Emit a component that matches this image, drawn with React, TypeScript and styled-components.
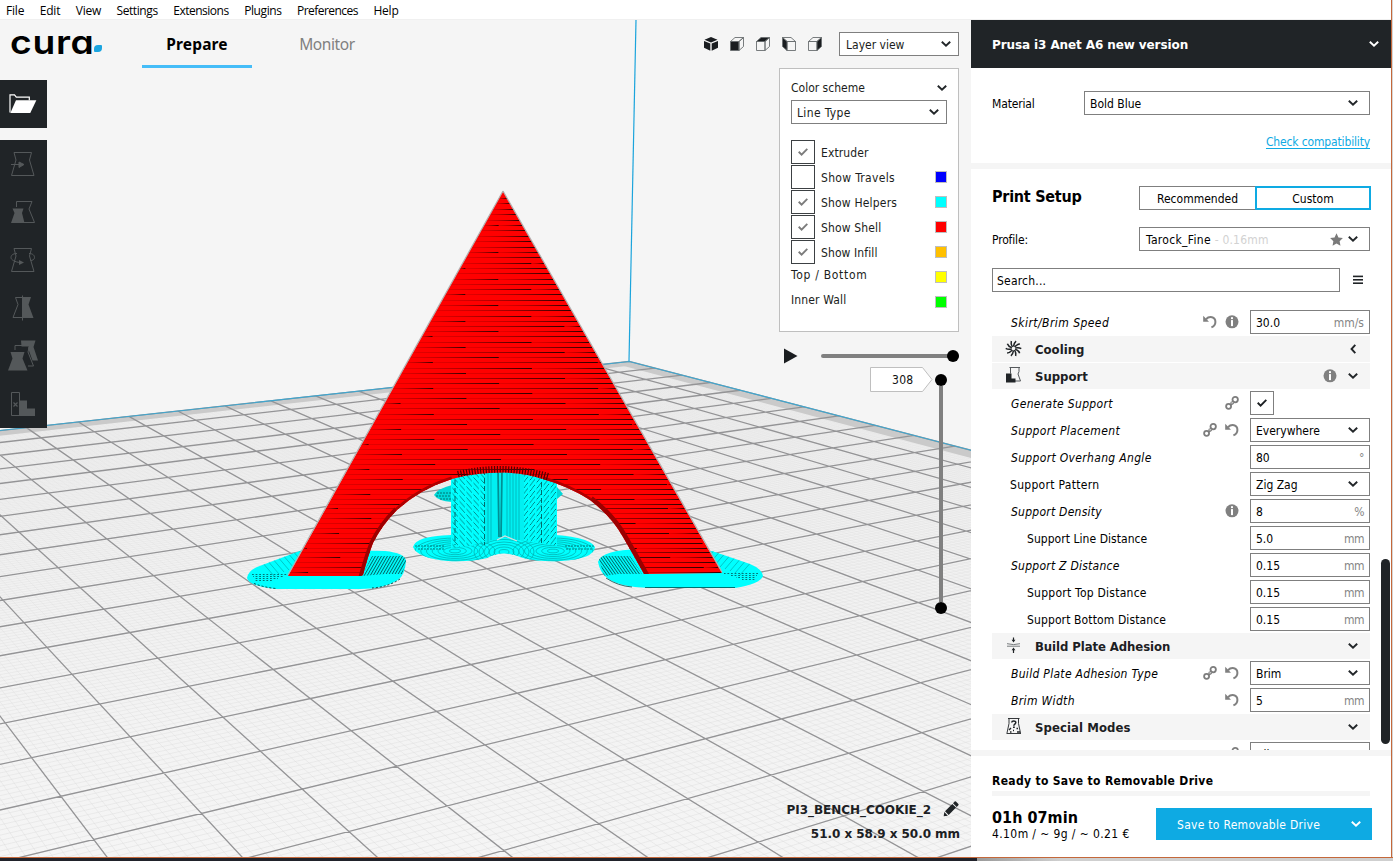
import React from "react";
import styled, { createGlobalStyle, css } from "styled-components";

const DARK = "#202427";
const BLUE = "#0eaae3";
const BORDER = "#7f7f7f";
const WIDE = `"DejaVu Sans", sans-serif`;

const GlobalStyle = createGlobalStyle`
  * { box-sizing: border-box; }
  html, body { margin: 0; padding: 0; }
  body {
    width: 1393px;
    height: 861px;
    overflow: hidden;
    font-family: "DejaVu Sans Condensed", "DejaVu Sans", sans-serif;
    font-size: 12px;
    color: #1a1d20;
  }
  svg { display: block; flex: none; }
`;

/* ---------- window frame ---------- */

const Window = styled.div`
  display: flex;
  flex-direction: column;
  width: 1393px;
  height: 861px;
  background: #fff;
`;

const WindowBody = styled.div`
  display: flex;
  height: 857px;
`;

const MainColumn = styled.div`
  display: flex;
  flex-direction: column;
  width: 1391px;
`;

const WindowEdge = styled.div`
  width: 2px;
  border-left: 1px solid #c4683a;
  background: #d6d6d6;
`;

const BottomEdge = styled.div`
  display: flex;
  height: 4px;
  border-top: 1px solid #c4683a;
`;

const Taskbar = styled.div`
  width: 977px;
  background: #20222a;
`;

const Backdrop = styled.div`
  flex: 1;
  background: linear-gradient(90deg, #9a9a9a, #cfcfcf 20%, #cfcfcf);
`;

const MenuBar = styled.nav`
  display: flex;
  align-items: center;
  gap: 15.5px;
  height: 20px;
  padding: 2px 0 0 6px;
  border-bottom: 1px solid #f0f0f0;
  font-family: "Open Sans", "Noto Sans", sans-serif;
  font-size: 12px;
  color: #000;
`;

const MenuItem = styled.span<{ $ls: number }>`
  white-space: nowrap;
  letter-spacing: ${(p) => p.$ls}px;
`;

const Workspace = styled.div`
  display: flex;
  height: 837px;
`;

/* ---------- viewport ---------- */

const Viewport = styled.main`
  position: relative;
  width: 971px;
  height: 837px;
  background: #f5f5f5;
  overflow: hidden;
`;

const SceneLayer = styled.div`
  position: absolute;
  inset: 0;
`;

const Overlay = styled.div`
  position: relative;
  display: grid;
  grid-template-columns: 1fr 181px;
  height: 100%;
  padding-right: 12px;
`;

const LeftSide = styled.div`
  display: flex;
  flex-direction: column;
`;

const TopBar = styled.header`
  display: flex;
  height: 60px;
  padding-left: 10px;
`;

const Logo = styled.div`
  display: flex;
  width: 132px;
  padding-top: 14px;
`;

const Wordmark = styled.span`
  display: block;
  width: 84px;
  height: 20px;
  font-family: Inter, sans-serif;
  font-size: 33px;
  font-weight: 600;
  line-height: 16px;
  letter-spacing: 0.6px;
  color: #000;
  font-feature-settings: "cv11", "ss03";
  transform: scaleX(1.13);
  transform-origin: 0 0;
`;

const Leaf = styled.i`
  width: 8px;
  height: 7px;
  margin-top: 11px;
  border-radius: 4px 1px 4px 1px;
  background: #1aa5e0;
`;

const Stage = styled.div<{ $active?: boolean }>`
  width: ${(p) => (p.$active ? 110 : 150)}px;
  height: 48px;
  padding-top: 13px;
  text-align: center;
  font-family: "Noto Sans", "Open Sans", sans-serif;
  font-size: 15.5px;
  line-height: 22px;
  font-weight: ${(p) => (p.$active ? 700 : 400)};
  letter-spacing: ${(p) => (p.$active ? 0.15 : -0.4)}px;
  color: ${(p) => (p.$active ? "#000" : "#808080")};
  border-bottom: ${(p) => (p.$active ? "3px solid #45bdf8" : "none")};
`;

const OpenButton = styled.button`
  display: flex;
  align-items: center;
  justify-content: center;
  width: 47px;
  height: 48px;
  margin: 0 0 12px;
  padding: 0 2px 0 0;
  border: 0;
  background: ${DARK};
`;

const ToolRail = styled.div`
  display: flex;
  flex-direction: column;
  width: 47px;
  height: 288px;
  background: ${DARK};
`;

const Tool = styled.div`
  display: flex;
  align-items: center;
  justify-content: center;
  height: 48px;
  padding-right: 1px;
`;

const RightSide = styled.div`
  display: flex;
  flex-direction: column;
  align-items: flex-end;
`;

const ViewRow = styled.div`
  display: flex;
  align-items: center;
  gap: 12px;
  margin-top: 12px;
  margin-bottom: 12px;
`;

const ViewSelectWrap = styled.div`
  width: 120px;
  margin-left: 5px;
`;

const Panel = styled.section`
  display: flex;
  flex-direction: column;
  width: 180px;
  height: 264px;
  padding: 8px 11px 0;
  border: 1px solid #bfbfbf;
  background: #fff;
`;

const PanelHead = styled.div`
  display: flex;
  align-items: center;
  justify-content: space-between;
  height: 21px;
  margin-bottom: 2px;
`;

const SchemeWrap = styled.div`
  width: 156px;
  margin-bottom: 16px;
`;

const LegendRow = styled.div<{ $plain?: boolean }>`
  display: flex;
  align-items: center;
  height: 25px;
  padding-bottom: 1px;
  ${(p) =>
    p.$plain &&
    css`
      & > span { margin-left: 0; padding-bottom: 6px; }
    `}
`;

const LegendText = styled.span<{ $ls?: number }>`
  flex: 1;
  margin-left: 6px;
  padding-top: 1px;
  white-space: nowrap;
  letter-spacing: ${(p) => p.$ls ?? 0}px;
`;

const Swatch = styled.i<{ $c: string }>`
  width: 12px;
  height: 12px;
  border: 1px solid #bfbfbf;
  background: ${(p) => p.$c};
`;

const CheckBox = styled.div<{ $dark?: boolean }>`
  display: flex;
  align-items: center;
  justify-content: center;
  width: 24px;
  height: 24px;
  border: 1px solid ${(p) => (p.$dark ? "#3c4043" : BORDER)};
  background: #fff;
`;

const PathSlider = styled.div`
  display: flex;
  align-items: center;
  width: 176px;
  height: 18px;
  margin-top: 15px;
`;

const PathTrack = styled.div`
  display: flex;
  align-items: center;
  justify-content: flex-end;
  flex: 1;
  height: 4px;
  margin-left: 23px;
  border-radius: 2px;
  background: #808080;
`;

const Knob = styled.i`
  width: 12px;
  height: 12px;
  border-radius: 50%;
  background: #000;
`;

const LayerSlider = styled.div`
  display: flex;
  align-items: flex-start;
  gap: 2px;
  margin: 2px 12px 0 0;
`;

const LayerTag = styled.div`
  display: grid;
  width: 63px;
  height: 26px;
  & > * { grid-area: 1 / 1; }
  & > span {
    padding-left: 22px;
    line-height: 27px;
    letter-spacing: 0.3px;
    color: #111;
  }
`;

const LayerTrack = styled.div`
  display: flex;
  flex-direction: column;
  align-items: center;
  width: 12px;
  height: 240px;
  margin-top: 7px;
`;

const LayerBar = styled.div`
  flex: 1;
  width: 4px;
  background: #808080;
`;

const JobInfo = styled.div`
  display: flex;
  flex-direction: column;
  align-items: flex-end;
  margin-top: auto;
  margin-right: -1px;
  padding-bottom: 11px;
  font-family: ${WIDE};
  font-weight: 700;
  font-size: 12px;
  color: #1c2023;
  white-space: nowrap;
`;

const JobLine = styled.div<{ $ls: number }>`
  display: flex;
  align-items: center;
  gap: 12px;
  height: 24px;
  letter-spacing: ${(p) => p.$ls}px;
`;

const PencilSlot = styled.span`
  padding: 0 1px 2px 0;
`;

/* ---------- sidebar ---------- */

const Sidebar = styled.aside`
  display: flex;
  flex-direction: column;
  width: 420px;
  height: 837px;
  background: #fff;
  color: #000;
`;

const MachineHeader = styled.div`
  display: flex;
  align-items: center;
  justify-content: space-between;
  height: 48px;
  padding: 0 12px 0 21px;
  background: ${DARK};
  color: #fff;
  font-family: ${WIDE};
  font-weight: 700;
`;

const MachineName = styled.span`
  padding-top: 1px;
  white-space: nowrap;
  letter-spacing: -0.1px;
`;

const MaterialSection = styled.section`
  height: 95px;
  padding: 23px 21px 0;
`;

const FieldRow = styled.div`
  display: grid;
  grid-template-columns: 92px 286px;
  align-items: center;
`;

const FieldLabel = styled.span`
  padding-top: 1px;
  letter-spacing: -0.15px;
`;

const CompatLink = styled.a`
  display: block;
  margin-top: 20px;
  text-align: right;
  color: ${BLUE};
  text-decoration: underline;
  text-underline-offset: 2px;
  letter-spacing: -0.15px;
`;

const Divider = styled.div`
  height: 6px;
  background: #f5f5f5;
`;

const SetupSection = styled.section`
  height: 140px;
  padding: 17px 20px 0 21px;
`;

const SetupHead = styled.div`
  display: flex;
  align-items: center;
  justify-content: space-between;
  margin-bottom: 17px;
`;

const Heading = styled.h2`
  margin: -4px 0 0;
  font-size: 16px;
  letter-spacing: -0.25px;
`;

const ModeSwitch = styled.div`
  display: flex;
  width: 232px;
`;

const Mode = styled.div<{ $on?: boolean }>`
  width: 116px;
  height: 24px;
  border: ${(p) => (p.$on ? `2px solid ${BLUE}` : `1px solid ${BORDER}`)};
  border-right-width: ${(p) => (p.$on ? 2 : 0)}px;
  line-height: ${(p) => (p.$on ? 22 : 24)}px;
  text-align: center;
`;

const ProfileRow = styled.div`
  display: grid;
  grid-template-columns: 147px 231px;
  align-items: center;
  margin-bottom: 17px;
`;

const SearchRow = styled.div`
  display: flex;
  align-items: center;
  gap: 13px;
`;

const SearchBox = styled.div`
  width: 348px;
  height: 24px;
  padding-left: 4px;
  border: 1px solid ${BORDER};
  line-height: 24px;
  letter-spacing: 0.2px;
`;

const Select = styled.div<{ $pad?: number; $end?: number; $ls?: number }>`
  display: flex;
  align-items: center;
  height: 24px;
  padding: 0 ${(p) => p.$end ?? 11}px 0 ${(p) => p.$pad ?? 5}px;
  border: 1px solid ${BORDER};
  background: #fff;
  white-space: nowrap;
  letter-spacing: ${(p) => p.$ls ?? 0}px;
  & > span:first-child { flex: 1; padding-top: 2px; }
`;

const Faint = styled.em`
  font-style: normal;
  letter-spacing: 0.2px;
  color: #d2d2d2;
`;

const StarSlot = styled.span`
  margin-right: 5px;
`;

const SettingsArea = styled.div`
  display: flex;
  height: 441px;
  overflow: hidden;
`;

const SettingsList = styled.div`
  width: 378px;
  margin-left: 21px;
`;

const ScrollTrack = styled.div`
  width: 9px;
  margin-left: 11px;
  padding-top: 250px;
`;

const ScrollThumb = styled.div`
  height: 185px;
  border-radius: 5px;
  background: ${DARK};
`;

const Category = styled.div`
  display: flex;
  align-items: center;
  height: 26px;
  margin-bottom: 1px;
  padding: 0 12px 0 13px;
  background: #f5f5f5;
  font-size: 13px;
  font-weight: 700;
  color: #1c2023;
`;

const CategoryName = styled.span<{ $ls: number }>`
  flex: 1;
  margin-left: 12px;
  padding-top: 1px;
  letter-spacing: ${(p) => p.$ls}px;
`;

const InfoSlot = styled.span`
  margin-right: 11px;
`;

const SettingRow = styled.div`
  display: flex;
  align-items: flex-start;
  height: 27px;
  padding-top: 1px;
`;

const SettingName = styled.span<{ $italic?: boolean; $indent?: boolean; $ls: number }>`
  flex: 1;
  padding-left: ${(p) => (p.$indent ? 35 : p.$italic ? 19 : 18)}px;
  line-height: 27px;
  font-style: ${(p) => (p.$italic ? "italic" : "normal")};
  letter-spacing: ${(p) => p.$ls}px;
  white-space: nowrap;
`;

const RowIcons = styled.span`
  display: flex;
  gap: 8px;
  padding: 5px 11px 0 0;
`;

const ValueCell = styled.div`
  width: 120px;
`;

const NumberBox = styled.div`
  display: flex;
  justify-content: space-between;
  height: 24px;
  padding: 0 5px;
  border: 1px solid ${BORDER};
  line-height: 24px;
`;

const Unit = styled.span<{ $ls: number }>`
  color: #858585;
  letter-spacing: ${(p) => p.$ls}px;
`;

const Footer = styled.footer`
  flex: 1;
  padding: 16px 19px 0 21px;
`;

const Status = styled.div`
  height: 19px;
  line-height: 18px;
  font-weight: 700;
  white-space: nowrap;
  letter-spacing: 0.33px;
`;

const Progress = styled.div`
  width: 378px;
  height: 5px;
  background: #f5f5f5;
`;

const FooterRow = styled.div`
  display: flex;
  justify-content: space-between;
  margin-top: 12px;
`;

const Estimate = styled.div`
  white-space: nowrap;
`;

const Duration = styled.div`
  height: 17px;
  font-size: 16px;
  line-height: 20px;
  font-weight: 700;
  letter-spacing: 0.05px;
`;

const Usage = styled.div`
  line-height: 18px;
  letter-spacing: 0.4px;
`;

const SaveButton = styled.div`
  display: flex;
  align-items: center;
  width: 216px;
  height: 32px;
  padding: 0 11px 0 21px;
  background: ${BLUE};
  color: #fff;
  letter-spacing: 0.28px;
  & > span { flex: 1; padding-top: 1px; }
`;

/* ---------- icons ---------- */

const Chevron = ({ color = "#222629", left = false }: { color?: string; left?: boolean }) => (
  <svg width="10" height="10" viewBox="0 0 10 10" fill="none" stroke={color} strokeWidth="1.9">
    {left ? <path d="M7.300 .8 3.500 5l3.800 4.200" /> : <path d="M.8 2.800 5 6.800l4.200-4" />}
  </svg>
);

const Check = ({ color }: { color: string }) => (
  <svg width="10" height="8" viewBox="0 0 10 8" fill="none" stroke={color} strokeWidth="1.9">
    <path d="M.7 3.800 3.600 6.600 9.300.9" />
  </svg>
);

const Info = () => (
  <svg width="14" height="14" viewBox="0 0 14 14">
    <circle cx="7" cy="6.800" r="6.500" fill="#808080" />
    <rect x="6" y="2.200" width="2" height="1.900" fill="#fff" />
    <rect x="6" y="5.100" width="2" height="6" fill="#fff" />
  </svg>
);

const Undo = () => (
  <svg width="14" height="14" viewBox="0 0 14 14" fill="none">
    <path d="M3 4.200C6.500.6 12.400 1.800 12.400 7c0 2.600-1.600 4.400-4 5.400" stroke="#808080" strokeWidth="2" />
    <path d="M.2.800v6h5.800z" fill="#808080" />
  </svg>
);

const LinkIcon = () => (
  <svg width="14" height="14" viewBox="0 0 14 14" fill="none" stroke="#7d7d7d" strokeWidth="1.800">
    <circle cx="3.600" cy="10.300" r="2.500" />
    <circle cx="10.200" cy="3.600" r="2.700" />
    <path d="M5 8 8.500 7.500M5.500 6.500 8 5.600M6 9l2.800-1.800" strokeWidth="1.100" />
  </svg>
);

const Fan = () => (
  <svg width="18" height="18" viewBox="-8.500 -8.500 18 18" fill="none" stroke={DARK} strokeWidth="1.500">
    {Array.from({ length: 10 }, (_, i) => (
      <path key={i} d="M0-1.800C.3-4 .8-6 2.600-7.300" transform={`rotate(${i * 36})`} />
    ))}
  </svg>
);

const SupportIcon = () => (
  <svg width="18" height="18" viewBox="0 0 18 18">
    <path d="M4.500 .5h10.500M5.500 .5v6M14 .5v4l-1 2.500 2.500 7H10" fill="none" stroke="#55595c" strokeWidth="1" />
    <path d="M1 6.500h5.500v5h4v4H1z" fill={DARK} />
  </svg>
);

const AdhesionIcon = () => (
  <svg width="18" height="18" viewBox="0 0 18 18">
    <path d="M8.500 .500v3M8.500 13v3" stroke={DARK} strokeWidth="1.200" />
    <path d="M6.600 2.800h3.800L8.500 5.500zM6.600 13.200h3.800L8.500 10.500z" fill={DARK} />
    <path d="M2 6.700q6.500 1.800 13 0M2 9.200h13" fill="none" stroke="#777b7d" strokeWidth="1" />
  </svg>
);

const SpecialIcon = () => (
  <svg width="18" height="18" viewBox="0 0 18 18" fill="none" stroke={DARK}>
    <path d="M3 .5h11.500M4 .5v5L2 15M13.500.5v5l2 9.500M1.500 15.500h14.500" strokeWidth=".9" />
    <path d="M6.700 4.500C6.800 2.500 10.800 2.300 10.800 4.500c0 1.500-2 1.700-2 3.300" strokeWidth="1.500" />
    <path d="M8 9.300h1.800M4 12l2-2M5 14h1.500M8 12.500h1M12 14h3M11.500 10.500h1.500" strokeWidth="1.400" />
  </svg>
);

const Star = () => (
  <svg width="13" height="13" viewBox="0 0 24 24" fill="#7a7a7a">
    <path d="M12 .5l3.600 7.700 8.200 1-6 5.800 1.500 8.400L12 19.300l-7.300 4.100L6.200 15l-6-5.800 8.200-1z" />
  </svg>
);

const Burger = () => (
  <svg width="10" height="10" viewBox="0 0 10 10" fill={DARK}>
    <rect y=".6" width="10" height="1.600" />
    <rect y="4" width="10" height="1.600" />
    <rect y="7.400" width="10" height="1.600" />
  </svg>
);

const Pencil = () => (
  <svg width="16" height="16" viewBox="0 0 16 16" fill={DARK}>
    <path d="M.7 15.300l.6-4.300 3.600 3.700zM2 10.200l7.300-7.300 3.700 3.700-7.300 7.400zM10 2.200l1.700-1.700q.6-.5 1.200 0l2.500 2.500q.5.600 0 1.200l-1.700 1.700z" />
  </svg>
);

const Folder = () => (
  <svg width="28" height="20" viewBox="0 0 28 20">
    <path d="M1 18.500V.8h4.500l1.800 2.400h13v3" fill="none" stroke="#fff" strokeWidth="1.200" />
    <path d="M7.200 6.500h21L21.900 19.700H1.400z" transform="scale(.97)" fill="#fff" />
  </svg>
);

const TOOL = "#54585a";

const toolIcons = [
  <g key="move">
    <path d="M3 .5h17.500l-2 7.500L23 23.500H.5L5 8z" fill="none" stroke={TOOL} />
    <path d="M0 12.500h9M8 10l5 2.500-5 3z" fill={TOOL} stroke={TOOL} />
  </g>,
  <g key="scale">
    <path d="M5.500 7V1.500h15.500l-3 7.500 5.500 13.500H12" fill="none" stroke={TOOL} />
    <path d="M1.500 8.500h11l-1.500 4.500 2.500 10H0l3.500-10z" fill={TOOL} />
  </g>,
  <g key="rotate">
    <path d="M3 .5h17.500l-2 7.500L23 23.500H.5L5 8z" fill="none" stroke={TOOL} />
    <path d="M6 5.500C1 5.500 0 8 0 9.500 0 12 4 14 9 14.500M18 5.500c4 0 5.500 2 5.500 4s-2 3-4 3" fill="none" stroke={TOOL} />
    <path d="M8 12l5 2.500L8 17z" fill={TOOL} />
  </g>,
  <g key="mirror">
    <path d="M11.500 1.500H4.500L7 8.500 2 21.500h9.500" fill="none" stroke={TOOL} />
    <path d="M11.500-.5v25" stroke={TOOL} />
    <path d="M12 1h8l-2.500 7.500 5 13.500H12z" fill={TOOL} />
  </g>,
  <g key="permodel">
    <path d="M10-3.500h14.500L22.500 3l4.500 13.500h-5.500L17 4l1-1.500h-7.500z" fill={TOOL} />
    <path d="M4 6V1.500h14.500L17 8l5.500 14H17" fill="none" stroke={TOOL} />
    <path d="M-.5 8h14l-2 6.500L16.500 26.500H-3L1.500 14.500z" fill={TOOL} />
  </g>,
  <g key="blocker">
    <path d="M.5.500h8v23h-8z" fill="none" stroke={TOOL} />
    <path d="M8 8.500h8v8h8v7.500H8z" fill={TOOL} />
    <path d="M2.500 10.500l4 4M6.500 10.500l-4 4" stroke={TOOL} strokeWidth="1.200" />
  </g>,
];

type Face = "all" | "front" | "top" | "left" | "right";

const Cube = ({ face }: { face: Face }) => {
  if (face === "all") {
    return (
      <svg width="14" height="14" viewBox="0 0 14 14" fill="#1a1d20">
        <path d="M7 0l6.500 2.700L7 5.400.5 2.700zM0 3.900l6.300 2.600v7.300L0 10.800zM14 3.900L7.700 6.500v7.300l6.300-3z" />
      </svg>
    );
  }
  const flip = face === "left" ? "translate(14 0) scale(-1 1)" : undefined;
  return (
    <svg width="14" height="14" viewBox="0 0 14 14" fill="none" stroke="#6a6e70" strokeWidth=".9">
      <g transform={flip}>
        <path d="M.5 4.500h8.500v9H.5z" fill={face === "front" ? "#1a1d20" : "none"} />
        <path d="M.5 4.500l4.500-4h8.500l-4.500 4z" fill={face === "top" ? "#1a1d20" : "none"} />
        <path d="M9 4.500l4.500-4v9L9 13.500z" fill={face === "left" || face === "right" ? "#1a1d20" : "none"} />
      </g>
    </svg>
  );
};

/* ---------- 3D scene ---------- */

type Anchor = [number, number, number, number];

// Build plate cells (u, v) paired with their projected screen position.
const anchors: Anchor[] = [
  [0, 0, 46.7, 647.7], [0, 5, 200.7, 814], [1, -6, 1.7, 516], [4, 0, 354.7, 592.7],
  [3, 5, 485.3, 744.7], [3, 7, 599, 823.7], [7, 7, 922, 732], [9, 5, 919.3, 639.3],
  [9, 3, 805.3, 593.3], [12, 0, 820, 509], [14, -2, 829.3, 466.3], [16, -3, 875, 442.7],
  [17, -12, 629, 361],
];

function solveProjection(points: Anchor[]): number[] {
  const n = 8;
  const m = Array.from({ length: n }, () => new Array(n + 1).fill(0));
  const add = (row: number[], rhs: number) => {
    for (let i = 0; i < n; i++) {
      for (let j = 0; j < n; j++) m[i][j] += row[i] * row[j];
      m[i][n] += row[i] * rhs;
    }
  };
  for (const [u, v, x, y] of points) {
    add([u, v, 1, 0, 0, 0, -u * x, -v * x], x);
    add([0, 0, 0, u, v, 1, -u * y, -v * y], y);
  }
  for (let c = 0; c < n; c++) {
    let p = c;
    for (let r = c + 1; r < n; r++) if (Math.abs(m[r][c]) > Math.abs(m[p][c])) p = r;
    [m[c], m[p]] = [m[p], m[c]];
    for (let r = 0; r < n; r++) {
      if (r === c) continue;
      const f = m[r][c] / m[c][c];
      for (let k = c; k <= n; k++) m[r][k] -= f * m[c][k];
    }
  }
  return m.map((row, i) => row[n] / row[i]);
}

const H = solveProjection(anchors);

const project = (u: number, v: number): string => {
  const w = H[6] * u + H[7] * v + 1;
  const x = (H[0] * u + H[1] * v + H[2]) / w;
  const y = (H[3] * u + H[4] * v + H[5]) / w;
  return `${x.toFixed(2)} ${y.toFixed(2)}`;
};

const U0 = -5;
const U1 = 17;
const V0 = -12;
const V1 = 9;

const gridPath = (step: number) => {
  let d = "";
  for (let i = 0; i <= Math.round((U1 - U0) / step); i++) {
    const u = U0 + i * step;
    d += `M${project(u, V0)}L${project(u, V1)}`;
  }
  for (let i = 0; i <= Math.round((V1 - V0) / step); i++) {
    const v = V0 + i * step;
    d += `M${project(U0, v)}L${project(U1, v)}`;
  }
  return d;
};

const majorGrid = gridPath(1);
const minorGrid = gridPath(0.1);
const quad = (a: number, b: number, c: number, d: number) =>
  `M${project(a, b)}L${project(c, b)}L${project(c, d)}L${project(a, d)}Z`;

const RAMP = 165;

const layerLines = (() => {
  const out: { x1: number; x2: number; y: number }[] = [];
  let y = 198;
  let k = 0;
  while (y < 574) {
    const t = (y - 191) / 383;
    const left = 503 - 215 * t;
    const right = 503 + 219 * t;
    let start = left;
    let end = left + ((k * 0.618) % 1) * RAMP;
    while (start < right) {
      const stop = Math.min(end, right);
      if (stop - start > 3) out.push({ x1: start, x2: stop, y: Math.round(y) });
      start = stop;
      end += RAMP;
    }
    y += 5.45 - 0.65 * t;
    k++;
  }
  return out;
})();

const ARCH =
  "Q368 556 373 543Q382 525 397 510Q420 489 452 479Q474 472.500 503 472.500Q525 473 543 479Q570 487 590 500Q612 517 623 537Q634 556 644 574";
const BODY = `M503 191 288 576H361L363 575${ARCH}L722 573Z`;
const brimLeft = "M247 578Q248 571 257 567L305 549L385 551Q405 553 406 561Q405 575 398 580Q384 589 360 589H275Q249 586 247 578Z";
const brimRight = "M763 576Q762 569 750 564L712 551L640 549Q601 550 598 562Q600 572 606 577Q617 587 650 588H735Q760 584 763 576Z";
const brimBack = "M413 547Q415 536 451 535L540 534Q590 536 595 547Q594 559 561 561Q540 562 523 558Q503 549 487 558Q470 562 448 561Q417 558 413 547Z";

const rings = (cx: number, cy: number, rx: number, ry: number, n: number) =>
  Array.from({ length: n }, (_, i) => {
    const s = (i + 1) / n;
    return <ellipse key={`${cx}-${i}`} cx={cx} cy={cy} rx={rx * s} ry={ry * s} />;
  });

const range = (n: number) => Array.from({ length: n }, (_, i) => i);

const Scene = () => (
  <svg width="971" height="837" viewBox="0 20 971 837">
    <defs>
      <linearGradient id="plate" x1="0" y1="361" x2="0" y2="860" gradientUnits="userSpaceOnUse">
        <stop offset="0" stopColor="#eeeeee" />
        <stop offset="1" stopColor="#f5f5f5" />
      </linearGradient>
      <linearGradient id="minor" x1="0" y1="361" x2="0" y2="860" gradientUnits="userSpaceOnUse">
        <stop offset="0" stopColor="#dcdcdc" stopOpacity=".2" />
        <stop offset=".45" stopColor="#dcdcdc" stopOpacity=".45" />
        <stop offset="1" stopColor="#dadada" stopOpacity=".55" />
      </linearGradient>
      <linearGradient id="ramp">
        <stop offset="0" stopColor="#c00000" stopOpacity=".4" />
        <stop offset=".5" stopColor="#8a0000" stopOpacity=".75" />
        <stop offset="1" stopColor="#2a0000" />
      </linearGradient>
      <pattern id="zig" width="7" height="17" patternUnits="userSpaceOnUse" patternTransform="skewY(48)">
        <path d="M0 2.500H7M0 8H7M0 13.500H7" stroke="#008c8c" strokeWidth="1" strokeDasharray="3 1.500" />
      </pattern>
      <pattern id="zag" width="7" height="17" patternUnits="userSpaceOnUse" patternTransform="skewY(-52)">
        <path d="M0 2.500H7M0 8H7M0 13.500H7" stroke="#007c7c" strokeWidth="1" strokeDasharray="3 1.500" />
      </pattern>
      <pattern id="hatch" width="3" height="3" patternUnits="userSpaceOnUse" patternTransform="skewX(-30)">
        <path d="M.5 0V3" stroke="#006464" strokeWidth="1.200" />
      </pattern>
      <pattern id="hatchR" width="3" height="3" patternUnits="userSpaceOnUse" patternTransform="skewX(35)">
        <path d="M.5 0V3" stroke="#006464" strokeWidth="1.200" />
      </pattern>
      <clipPath id="body"><path d={BODY} /></clipPath>
      <clipPath id="bl"><path d={brimLeft} /></clipPath>
      <clipPath id="br"><path d={brimRight} /></clipPath>
      <clipPath id="bb"><path d={brimBack} /></clipPath>
    </defs>

    <path d={quad(U0, V0, U1, V1)} fill="url(#plate)" />
    <path d={minorGrid} fill="none" stroke="url(#minor)" strokeWidth=".8" />
    <path d={quad(U0, V0, U1, V0 + 0.45)} fill="#cacaca" />
    <path d={quad(U1 - 0.45, V0, U1, V1)} fill="#cacaca" />
    <path d={majorGrid} fill="none" stroke="#949496" strokeWidth="1.300" />
    <path d={`M${project(U0, V0)}L${project(U1, V0)}L${project(U1, V1)}`} fill="none" stroke="#3fa6cf" strokeWidth="1.100" />
    <path d="M629 361 636 20" fill="none" stroke="#1ba4dc" strokeWidth="1.200" />

    <g>
      <path d={brimLeft} fill="#00ffff" />
      <g clipPath="url(#bl)" fill="none">
        <path d="M362 576 372 556 408 556 402 574 385 574Z" fill="url(#hatch)" />
        {range(9).map((i) => (
          <path key={i} d={`M${262 + i * 5} ${562 - i * 2}l12 14`} stroke="#00b8b8" strokeWidth=".8" />
        ))}
        {range(4).map((i) => (
          <path key={i} d={`M${252 + i} ${574.5 + i * 2}H${290 - i * 6}`} stroke="#007878" strokeDasharray="1.800 1.800" strokeDashoffset={i} />
        ))}
      </g>
      <path d="M254 583.500q10 4 22 5M400 579q-12 8-28 9" fill="none" stroke="#003c3c" strokeDasharray="2 2" />

      <path d={brimRight} fill="#00ffff" />
      <g clipPath="url(#br)" fill="none">
        <path d="M642 574 630 556 598 556 604 576 618 574Z" fill="url(#hatchR)" />
        {range(9).map((i) => (
          <path key={i} d={`M${752 - i * 5} ${561 - i * 2}l-12 14`} stroke="#00b8b8" strokeWidth=".8" />
        ))}
        {range(4).map((i) => (
          <path key={i} d={`M${758 - i} ${573.5 + i * 2}H${724 + i * 6}`} stroke="#007878" strokeDasharray="1.800 1.800" strokeDashoffset={i} />
        ))}
      </g>
      <path d="M645 587.500H735M606 578q12 8 26 9" fill="none" stroke="#004c4c" strokeWidth=".8" />

      <path d="M434 495Q437 489 452 485V502Q438 501 434 495ZM557 487l6 7-6 5z" fill="#00d8d8" />
      <g fill="none" stroke="#006c6c" strokeWidth=".9" strokeDasharray="2 1">
        <path d="M437 493h15M436 496h16M440 499h12" />
      </g>
      <path d={brimBack} fill="#00ffff" />
      <g clipPath="url(#bb)" fill="none" stroke="#00b4b4" strokeWidth=".8">
        {rings(455, 551, 40, 13, 7)}
        {rings(504, 552, 30, 15, 6)}
        {rings(553, 551, 40, 13, 7)}
        <path d="M415 546h30M418 549h26M565 546h29M566 549h26" stroke="#005c5c" strokeDasharray="2 1" />
      </g>
      <path d="M451 476 503 466 557 478V546L530 542 503 537 470 546 451 548Z" fill="#00ffff" />
      <path d="M452 470H485V544L452 548Z" fill="url(#zig)" />
      <path d="M524 470H556V546L524 540Z" fill="url(#zag)" />
      <path d="M485 470H524V541L503 537 485 543Z" fill="#00f0f2" />
      <path d="M488 470V542M491 470v70M507 470v68M510 470v69M513 470v70M516 470v70M519 470v70" stroke="#00bcc0" strokeWidth="1" />
      <path d="M498 470l1 67M502 470l-1 67" stroke="#009094" strokeWidth="1.800" />
      <path d="M484.500 470V545M541.500 474V545M455 480V545" stroke="#006c6c" strokeDasharray="5 3" />
      <path d="M497 540l8-4 12 5" fill="none" stroke="#d8dede" strokeWidth="1.200" />
    </g>

    <path d={BODY} fill="#ff0000" />
    <g clipPath="url(#body)" fill="none">
      {layerLines.map((l, i) => (
        <rect key={i} x={l.x1} y={l.y} width={l.x2 - l.x1} height="1" fill="url(#ramp)" />
      ))}
      <path d="M362 577Q368 556 373 543Q382 525 397 510" stroke="#9c0000" strokeWidth="7" />
      <path d="M397 510Q420 489 452 479" stroke="#b00000" strokeWidth="5" />
      <path d="M543 479Q570 487 590 500" stroke="#b00000" strokeWidth="5" />
      <path d="M590 500Q612 517 623 537Q634 556 645 576" stroke="#9c0000" strokeWidth="9" />
      <path d="M458 475Q503 464 548 477" stroke="#500000" strokeWidth="8" strokeDasharray="1.200 1.600" />
    </g>
    <path d="M288 575 503 191" fill="none" stroke="#b4b0b0" strokeWidth="1.200" />
    <path d="M503 191 722 572" fill="none" stroke="#b4b0b0" strokeWidth="1.200" />
  </svg>
);

/* ---------- data ---------- */

const menus: [string, number][] = [
  ["File", -0.2], ["Edit", -0.2], ["View", -0.25], ["Settings", -0.4],
  ["Extensions", -0.5], ["Plugins", -0.4], ["Preferences", -0.55], ["Help", -0.2],
];

const legend: { label: string; checked?: boolean; color?: string; plain?: boolean; ls?: number }[] = [
  { label: "Extruder", checked: true, ls: 0.1 },
  { label: "Show Travels", checked: false, color: "#0000ff", ls: 0.32 },
  { label: "Show Helpers", checked: true, color: "#00ffff", ls: 0.18 },
  { label: "Show Shell", checked: true, color: "#ff0000", ls: 0.15 },
  { label: "Show Infill", checked: true, color: "#ffc000", ls: 0.1 },
  { label: "Top / Bottom", plain: true, color: "#ffff00", ls: 0.7 },
  { label: "Inner Wall", plain: true, color: "#00ff00", ls: 0.15 },
];

type Row =
  | { kind: "category"; name: string; icon: React.ReactNode; info?: boolean; closed?: boolean; ls?: number }
  | {
      kind: "setting";
      name: string;
      italic?: boolean;
      indent?: boolean;
      icons?: ("link" | "undo" | "info")[];
      value?: string;
      unit?: string;
      select?: boolean;
      check?: boolean;
      ls?: number;
    };

const rows: Row[] = [
  { kind: "setting", name: "Skirt/Brim Speed", italic: true, icons: ["undo", "info"], value: "30.0", unit: "mm/s", ls: 0.45 },
  { kind: "category", name: "Cooling", icon: <Fan />, closed: true, ls: 0 },
  { kind: "category", name: "Support", icon: <SupportIcon />, info: true, ls: 0 },
  { kind: "setting", name: "Generate Support", italic: true, icons: ["link"], check: true },
  { kind: "setting", name: "Support Placement", italic: true, icons: ["link", "undo"], value: "Everywhere", select: true, ls: 0.35 },
  { kind: "setting", name: "Support Overhang Angle", italic: true, value: "80", unit: "°" },
  { kind: "setting", name: "Support Pattern", value: "Zig Zag", select: true, ls: 0.3 },
  { kind: "setting", name: "Support Density", italic: true, icons: ["info"], value: "8", unit: "%", ls: 0.25 },
  { kind: "setting", name: "Support Line Distance", indent: true, value: "5.0", unit: "mm", ls: 0.05 },
  { kind: "setting", name: "Support Z Distance", italic: true, value: "0.15", unit: "mm", ls: 0.25 },
  { kind: "setting", name: "Support Top Distance", indent: true, value: "0.15", unit: "mm", ls: 0.25 },
  { kind: "setting", name: "Support Bottom Distance", indent: true, value: "0.15", unit: "mm", ls: 0.12 },
  { kind: "category", name: "Build Plate Adhesion", icon: <AdhesionIcon />, ls: -0.08 },
  { kind: "setting", name: "Build Plate Adhesion Type", italic: true, icons: ["link", "undo"], value: "Brim", select: true, ls: 0.3 },
  { kind: "setting", name: "Brim Width", italic: true, icons: ["undo"], value: "5", unit: "mm", ls: 0.35 },
  { kind: "category", name: "Special Modes", icon: <SpecialIcon />, ls: 0.08 },
  { kind: "setting", name: "", icons: ["link"], value: "All at Once", select: true },
];

const rowIcon = { link: LinkIcon, undo: Undo, info: Info };

const SettingsRow = ({ row }: { row: Row }) => {
  if (row.kind === "category") {
    return (
      <Category>
        {row.icon}
        <CategoryName $ls={row.ls ?? 0}>{row.name}</CategoryName>
        {row.info && <InfoSlot><Info /></InfoSlot>}
        <Chevron left={row.closed} />
      </Category>
    );
  }
  return (
    <SettingRow>
      <SettingName $italic={row.italic} $indent={row.indent} $ls={row.ls ?? 0.33}>{row.name}</SettingName>
      <RowIcons>
        {row.icons?.map((name) => {
          const Icon = rowIcon[name];
          return <Icon key={name} />;
        })}
      </RowIcons>
      <ValueCell>
        {row.check && <CheckBox><Check color="#1c2023" /></CheckBox>}
        {row.select && <Select><span>{row.value}</span><Chevron /></Select>}
        {row.unit && (
          <NumberBox>
            <span>{row.value}</span>
            <Unit $ls={row.unit === "mm/s" ? 0 : -0.5}>{row.unit}</Unit>
          </NumberBox>
        )}
      </ValueCell>
    </SettingRow>
  );
};

export default function App() {
  return (
    <Window>
      <GlobalStyle />
      <WindowBody>
        <MainColumn>
          <MenuBar>
            {menus.map(([label, ls]) => <MenuItem key={label} $ls={ls}>{label}</MenuItem>)}
          </MenuBar>
          <Workspace>
            <Viewport>
              <SceneLayer><Scene /></SceneLayer>
              <Overlay>
                <LeftSide>
                  <TopBar>
                    <Logo><Wordmark>cura</Wordmark><Leaf /></Logo>
                    <Stage $active>Prepare</Stage>
                    <Stage>Monitor</Stage>
                  </TopBar>
                  <OpenButton><Folder /></OpenButton>
                  <ToolRail>
                    {toolIcons.map((icon) => (
                      <Tool key={icon.key}>
                        <svg width="24" height="24" viewBox="0 0 24 24" overflow="visible">{icon}</svg>
                      </Tool>
                    ))}
                  </ToolRail>
                </LeftSide>
                <RightSide>
                  <ViewRow>
                    <Cube face="all" />
                    <Cube face="front" />
                    <Cube face="top" />
                    <Cube face="left" />
                    <Cube face="right" />
                    <ViewSelectWrap>
                      <Select $pad={6} $end={7}><span>Layer view</span><Chevron /></Select>
                    </ViewSelectWrap>
                  </ViewRow>
                  <Panel>
                    <PanelHead><span>Color scheme</span><Chevron /></PanelHead>
                    <SchemeWrap><Select $end={7} $ls={0.35}><span>Line Type</span><Chevron /></Select></SchemeWrap>
                    {legend.map((item) => (
                      <LegendRow key={item.label} $plain={item.plain}>
                        {!item.plain && (
                          <CheckBox $dark>{item.checked && <Check color="#7c7c7c" />}</CheckBox>
                        )}
                        <LegendText $ls={item.ls}>{item.label}</LegendText>
                        {item.color && <Swatch $c={item.color} />}
                      </LegendRow>
                    ))}
                  </Panel>
                  <PathSlider>
                    <svg width="15" height="16" viewBox="0 0 15 16"><path d="M1 .5 14.500 8 1 15.500z" fill="#1a1d20" /></svg>
                    <PathTrack><Knob /></PathTrack>
                  </PathSlider>
                  <LayerSlider>
                    <LayerTag>
                      <svg width="63" height="26" viewBox="0 0 63 26">
                        <path d="M.5 .5h52L62 12.500 52.500 24.500H.5z" fill="#fff" stroke="#bfbfbf" />
                      </svg>
                      <span>308</span>
                    </LayerTag>
                    <LayerTrack><Knob /><LayerBar /><Knob /></LayerTrack>
                  </LayerSlider>
                  <JobInfo>
                    <JobLine $ls={-0.05}>PI3_BENCH_COOKIE_2 <PencilSlot><Pencil /></PencilSlot></JobLine>
                    <JobLine $ls={-0.05}>51.0 x 58.9 x 50.0 mm</JobLine>
                  </JobInfo>
                </RightSide>
              </Overlay>
            </Viewport>
            <Sidebar>
              <MachineHeader>
                <MachineName>Prusa i3 Anet A6 new version</MachineName>
                <Chevron color="#fff" />
              </MachineHeader>
              <MaterialSection>
                <FieldRow>
                  <FieldLabel>Material</FieldLabel>
                  <Select><span>Bold Blue</span><Chevron /></Select>
                </FieldRow>
                <CompatLink>Check compatibility</CompatLink>
              </MaterialSection>
              <Divider />
              <SetupSection>
                <SetupHead>
                  <Heading>Print Setup</Heading>
                  <ModeSwitch><Mode>Recommended</Mode><Mode $on>Custom</Mode></ModeSwitch>
                </SetupHead>
                <ProfileRow>
                  <FieldLabel>Profile:</FieldLabel>
                  <Select $pad={6} $ls={0.32}>
                    <span>Tarock_Fine <Faint>- 0.16mm</Faint></span>
                    <StarSlot><Star /></StarSlot>
                    <Chevron />
                  </Select>
                </ProfileRow>
                <SearchRow><SearchBox>Search...</SearchBox><Burger /></SearchRow>
              </SetupSection>
              <SettingsArea>
                <SettingsList>{rows.map((row, i) => <SettingsRow key={i} row={row} />)}</SettingsList>
                <ScrollTrack><ScrollThumb /></ScrollTrack>
              </SettingsArea>
              <Divider />
              <Footer>
                <Status>Ready to Save to Removable Drive</Status>
                <Progress />
                <FooterRow>
                  <Estimate>
                    <Duration>01h 07min</Duration>
                    <Usage>4.10m / ~ 9g / ~ 0.21 €</Usage>
                  </Estimate>
                  <SaveButton><span>Save to Removable Drive</span><Chevron color="#fff" /></SaveButton>
                </FooterRow>
              </Footer>
            </Sidebar>
          </Workspace>
        </MainColumn>
        <WindowEdge />
      </WindowBody>
      <BottomEdge><Taskbar /><Backdrop /></BottomEdge>
    </Window>
  );
}
